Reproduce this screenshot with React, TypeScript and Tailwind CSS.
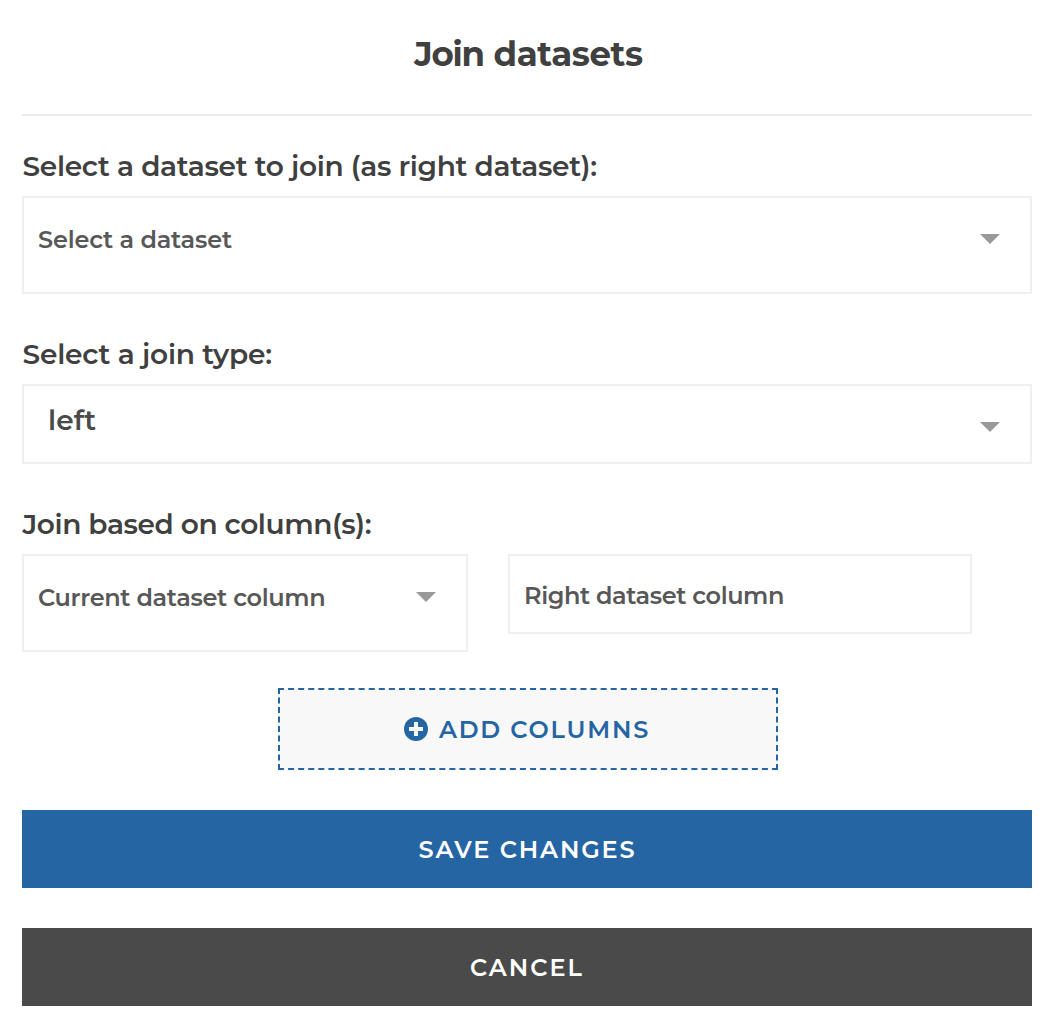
import type { ReactNode } from "react";

function Caret() {
  return (
    <svg className="shrink-0" width="20" height="10" viewBox="0 0 20 10" aria-hidden="true">
      <path d="M0 0h20L10 10z" fill="#999" />
    </svg>
  );
}

function Label({ children }: { children: ReactNode }) {
  return (
    <div className="mb-3 h-9 whitespace-nowrap pl-[0.5px] text-[28px] font-[560] leading-9 text-[#404040]">
      {children}
    </div>
  );
}

export default function App() {
  return (
    <main className="h-[1024px] w-[1050px] bg-white pl-[22px] pr-[18px] font-['Montserrat',Inter,sans-serif]">
      <h1 className="h-[116px] border-b-2 border-[#ebebeb] pl-[3px] pt-8 text-center text-[34px] font-bold leading-[44px] text-[#404040]">
        <span className="tracking-[-1.2px]">Join</span>{" "}
        <span className="tracking-[-0.35px]">datasets</span>
      </h1>

      <section className="pt-8">
        <Label><span className="tracking-[-0.3px]">Select a dataset to join (as right dataset):</span></Label>
        <button className="flex h-[98px] w-full items-start justify-between border-2 border-[#efefef] pl-3.5 pr-[30px] text-left text-[24px] font-[560] text-[#585858]">
          <span className="mt-[26px] leading-8 tracking-[-0.18px]">Select a dataset</span>
          <span className="mt-9 flex"><Caret /></span>
        </button>
      </section>

      <section className="pt-[42px]">
        <Label><span className="tracking-[-0.2px]">Select a join type:</span></Label>
        <button className="flex h-20 w-full items-start justify-between border-2 border-[#efefef] pl-6 pr-[30px] text-left text-[28px] font-[560] text-[#4a4a4a]">
          <span className="mt-4 leading-9 tracking-[0.1px]">left</span>
          <span className="mt-9 flex"><Caret /></span>
        </button>
      </section>

      <section className="pt-[42px]">
        <Label><span className="tracking-[-0.4px]">Join based on column(s):</span></Label>
        <div className="flex items-start gap-10 text-[24px] font-[560] text-[#585858]">
          <button className="flex h-[98px] w-[446px] items-start justify-between border-2 border-[#efefef] pl-3.5 pr-[30px] text-left">
            <span className="mt-[26px] leading-8 tracking-[-0.34px]">Current dataset column</span>
            <span className="mt-9 flex"><Caret /></span>
          </button>
          <button className="flex h-20 w-[464px] items-start border-2 border-[#efefef] pl-3.5 text-left">
            <span className="mt-6 leading-8 tracking-[-0.4px]">Right dataset column</span>
          </button>
        </div>
      </section>

      <button className="ml-64 mt-9 flex h-[82px] w-[500px] items-center justify-center gap-[11px] border-2 border-dashed border-[#2565a3] bg-[#f8f8f8] pr-0.5 text-[24px] font-semibold text-[#2565a3]">
        <svg width="24" height="24" viewBox="0 0 24 24" aria-hidden="true">
          <circle cx="12" cy="12" r="12" fill="currentColor" />
          <path d="M12 5v14M5 12h14" stroke="#f8f8f8" strokeWidth="4" />
        </svg>
        <span className="pt-0.5 tracking-[1.8px]">ADD COLUMNS</span>
      </button>

      <button className="mt-10 flex h-[78px] w-full items-center justify-center bg-[#2565a3] pl-px text-[24px] font-semibold tracking-[1.85px] text-white">
        <span className="pt-0.5">SAVE CHANGES</span>
      </button>
      <button className="mt-10 flex h-[78px] w-full items-center justify-center bg-[#4a4a4a] text-[24px] font-semibold tracking-[2px] text-white">
        <span className="pt-0.5">CANCEL</span>
      </button>
    </main>
  );
}
